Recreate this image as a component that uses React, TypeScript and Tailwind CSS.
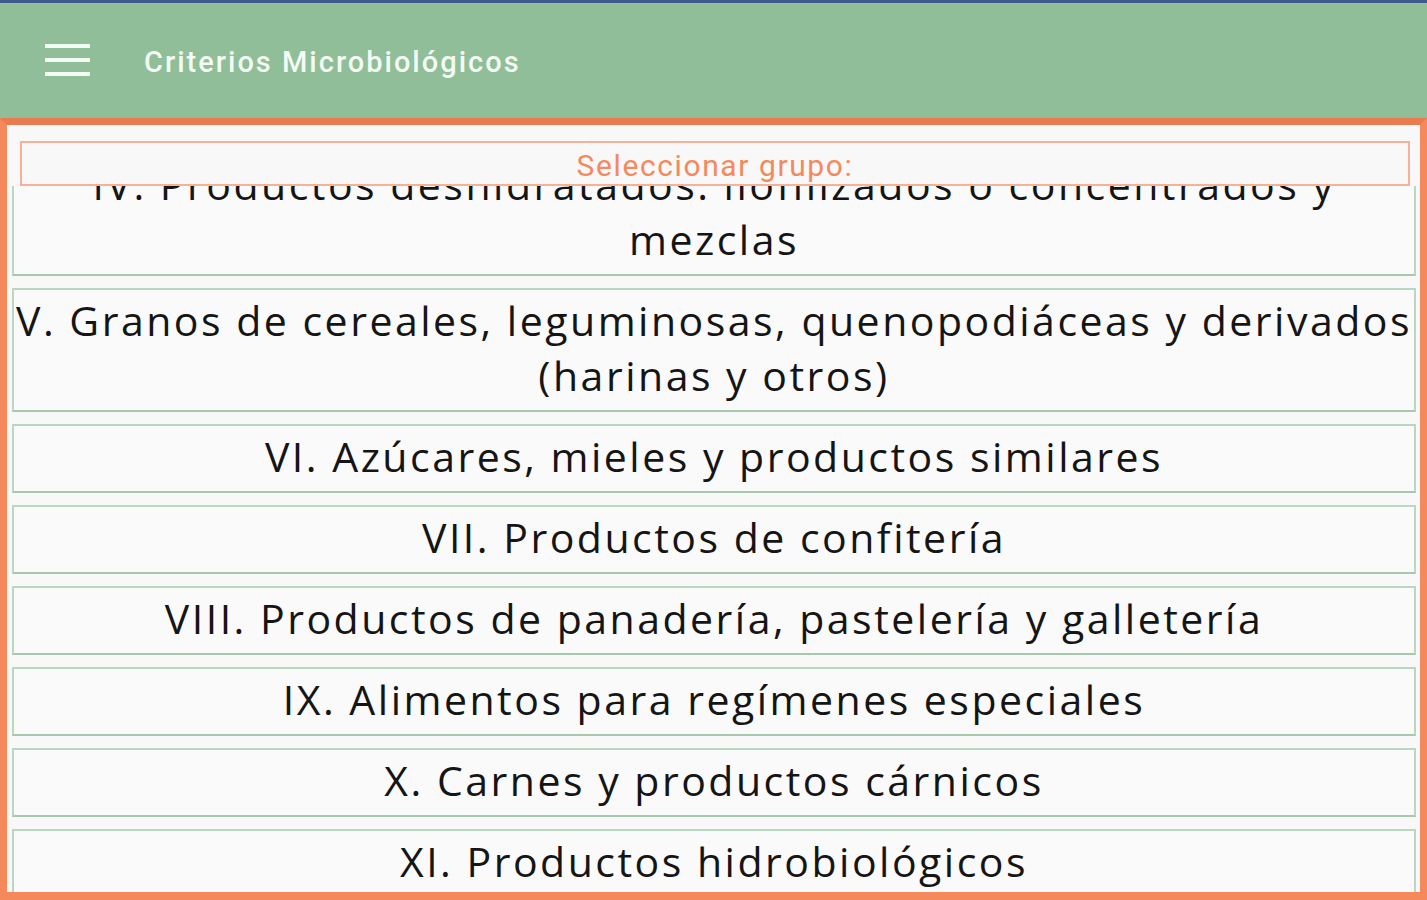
const GROUPS = [
  'IV. Productos deshidratados: liofilizados o concentrados y mezclas',
  'V. Granos de cereales, leguminosas, quenopodiáceas y derivados (harinas y otros)',
  'VI. Azúcares, mieles y productos similares',
  'VII. Productos de confitería',
  'VIII. Productos de panadería, pastelería y galletería',
  'IX. Alimentos para regímenes especiales',
  'X. Carnes y productos cárnicos',
  'XI. Productos hidrobiológicos',
];

function MenuIcon() {
  return (
    <div className="mb-[2px] flex w-[45px] flex-col gap-[10px]">
      <span className="h-[4px] w-full bg-[#f4faf4]" />
      <span className="h-[4px] w-full bg-[#f4faf4]" />
      <span className="h-[4px] w-full bg-[#f4faf4]" />
    </div>
  );
}

export default function App() {
  return (
    <div className="flex h-[900px] flex-col overflow-hidden bg-[#f8f8f8]">
      <div className="h-[3px] bg-[#3e5a8c]" />

      {/* Toolbar */}
      <header className="flex h-[115px] items-center bg-[#8fbe98] pl-[45px]">
        <MenuIcon />
        <h1 className="ml-[54px] mt-[4px] font-['Roboto',sans-serif] text-[29px] font-medium tracking-[2px] text-[#f4faf4]">
          Criterios Microbiológicos
        </h1>
      </header>

      {/* Group picker */}
      <main className="flex min-h-0 flex-1 flex-col border-[7px] border-b-[8px] border-[#f5895b] border-t-[#e97b4e] bg-[#f8f8f8]">
        <div className="mt-[16px] ml-[13px] mr-[10px] h-[45px] shrink-0 border-2 border-[#f7b197] pt-[8px] text-center font-['Roboto',sans-serif] text-[30px] leading-[30px] tracking-[1.6px] text-[#f5895e]">
          Seleccionar grupo:
        </div>

        <div className="ml-[5px] mr-[4px] min-h-0 flex-1 overflow-hidden">
          <div className="-mt-[34px] flex flex-col gap-3">
            {GROUPS.map((name) => (
              <button
                key={name}
                className="shrink-0 border-2 border-[#b9d8bf] border-b-[#a8c8ae] bg-[#fafafa] px-0 pt-[3px] pb-[7px] text-center font-['Open_Sans',sans-serif] text-[41px] leading-[55px] tracking-[2.5px] text-[#151515]"
              >
                {name}
              </button>
            ))}
          </div>
        </div>
      </main>
    </div>
  );
}
